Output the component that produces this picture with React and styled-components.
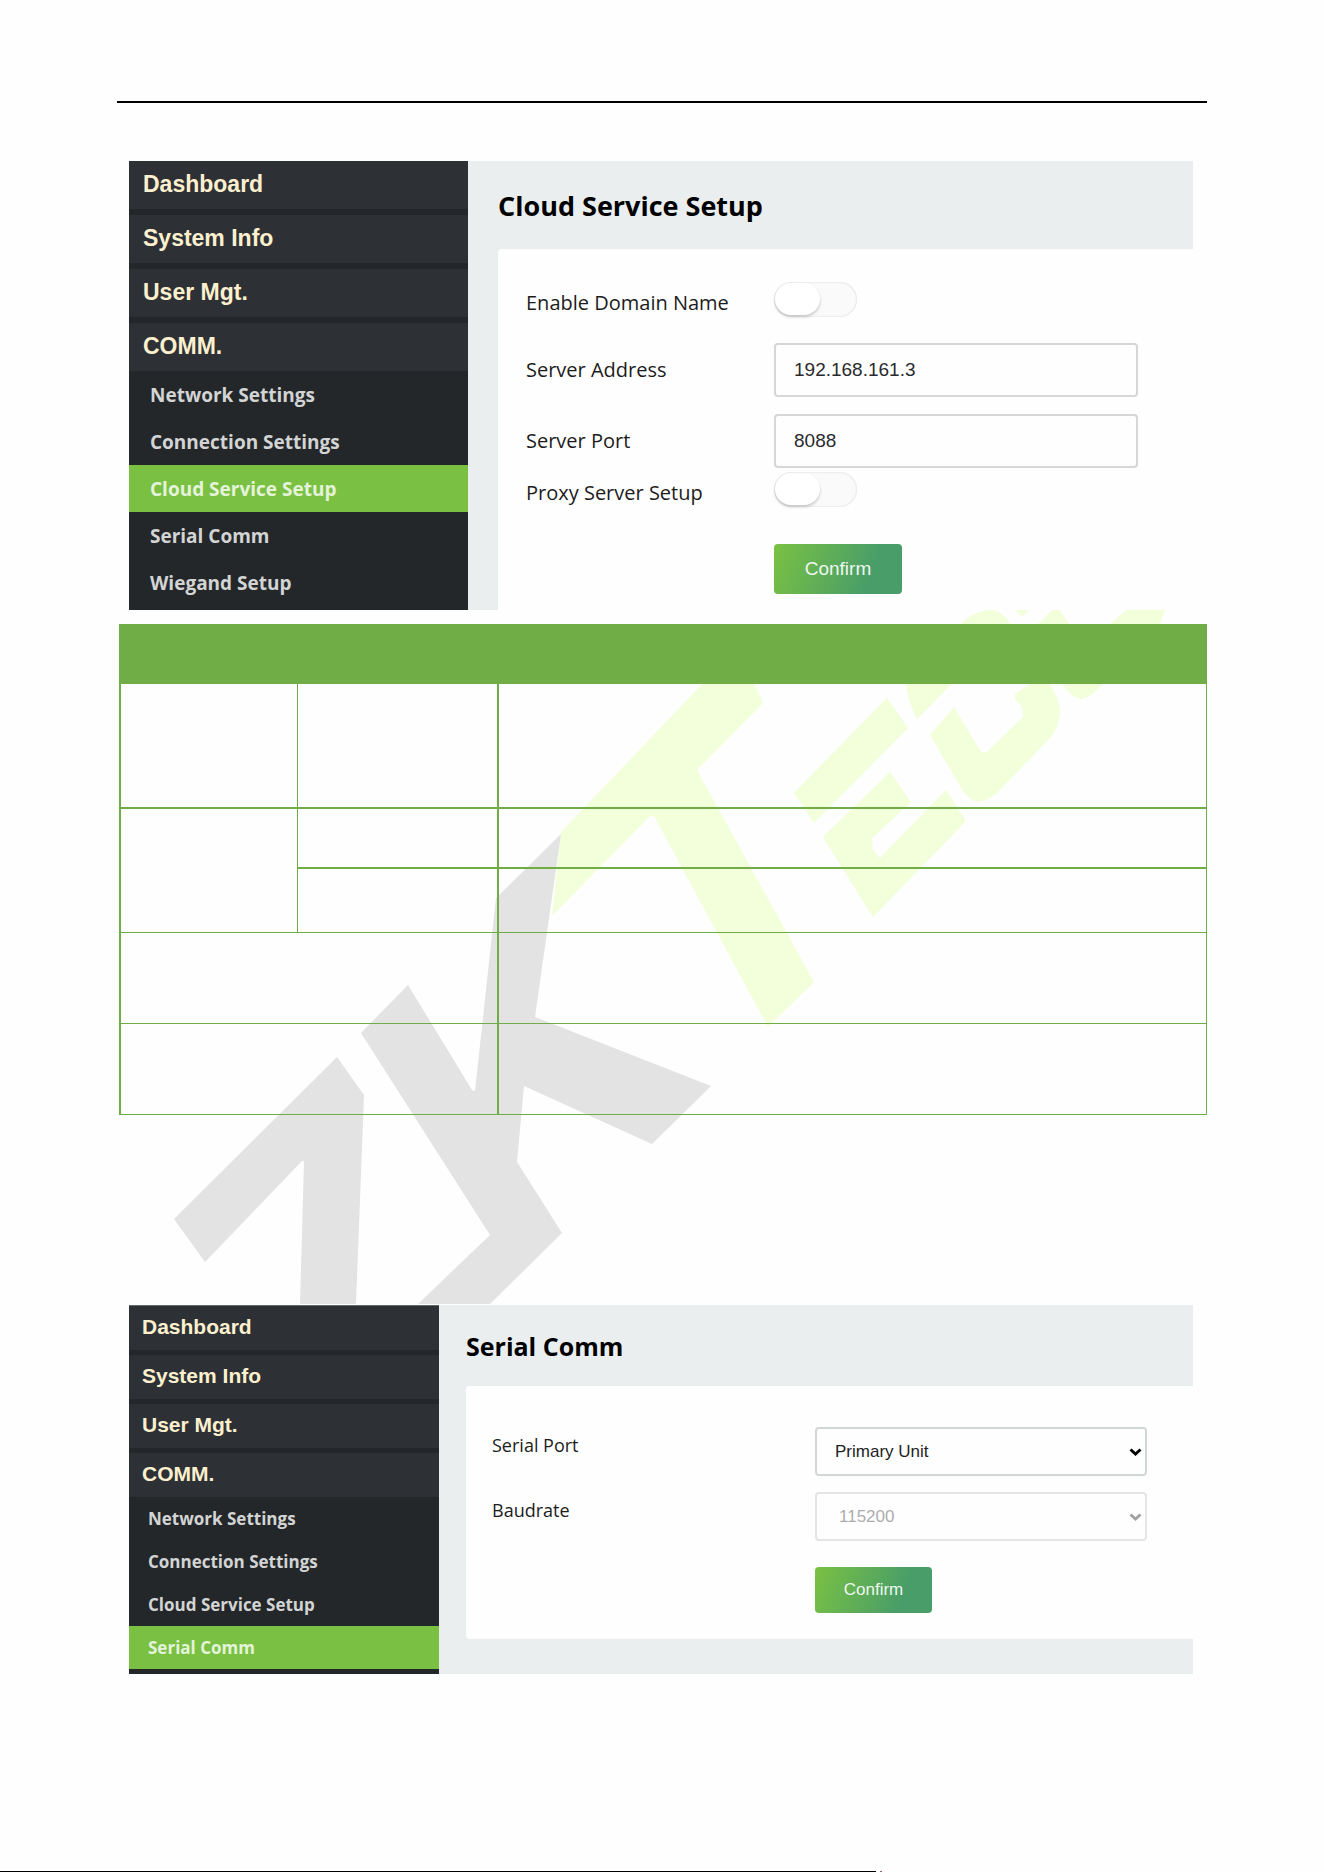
import React from 'react';
import styled, { createGlobalStyle, ThemeProvider } from 'styled-components';

const GlobalStyle = createGlobalStyle`
    * {
        box-sizing: border-box;
    }
    body {
        margin: 0;
        background-color: #fefefe;
        font-family: "Open Sans", "Noto Sans", sans-serif;
    }
`

const largePanel = {
    sidebarWidth: 339,
    menuFont: 23,
    menuHeight: 48,
    menuGap: 6,
    menuIndent: 14,
    menuNudge: 2,
    subFont: 19,
    subHeight: 47,
    subIndent: 21,
    mainIndent: 30,
    titleFont: 27,
    titleLine: 36,
    titlePadding: "27px 0 25px",
    cardPadding: "33px 55px 16px 28px",
    labelFont: 20,
    labelWidth: 248,
    fieldFont: 19,
    fieldHeight: 54,
    fieldLabelLine: 54,
    buttonWidth: 128,
    buttonHeight: 50,
}

const smallPanel = {
    sidebarWidth: 310,
    menuFont: 21,
    menuHeight: 44,
    menuGap: 5,
    menuIndent: 13,
    menuNudge: 2,
    subFont: 17,
    subHeight: 43,
    subIndent: 19,
    mainIndent: 27,
    titleFont: 25,
    titleLine: 34,
    titlePadding: "24px 0 23px",
    cardPadding: "41px 46px 26px 26px",
    labelFont: 18,
    labelWidth: 323,
    fieldFont: 17,
    fieldHeight: 49,
    fieldLabelLine: 36,
    buttonWidth: 117,
    buttonHeight: 46,
}

const Page = styled.div`
    min-height: 100vh;
    display: flex;
    flex-direction: column;
`

const PageHeader = styled.header`
    margin: 101px 117px 58px;
    border-top: 2px solid #000;
`

const Panel = styled.section`
    margin: 0 131px 0 129px;
    display: flex;
    background-color: #eaeeef;
`

const Sidebar = styled.nav`
    flex: 0 0 ${props => props.theme.sidebarWidth}px;
    padding-bottom: ${props => props.$bottom}px;
    border-top: ${props => props.$edge ? "1px solid #66696b" : "none"};
    background-color: #23272a;
`

const MenuList = styled.ul`
    list-style: none;
    margin: 0;
    padding: 0;
    display: flex;
    flex-direction: column;
    gap: ${props => props.theme.menuGap}px;
`

const SubList = styled.ul`
    list-style: none;
    margin: 0;
    padding: 0;
`

const MenuLink = styled.a`
    display: flex;
    align-items: center;
    height: ${props => props.theme.menuHeight}px;
    padding: 0 ${props => props.theme.menuIndent}px ${props => props.theme.menuNudge}px;
    background-color: #2d3035;
    color: #fdf0cf;
    font-family: "Liberation Sans", Arial, sans-serif;
    font-size: ${props => props.theme.menuFont}px;
    font-weight: 700;
    text-decoration: none;
`

const SubLink = styled.a`
    display: flex;
    align-items: center;
    height: ${props => props.theme.subHeight}px;
    padding: 0 ${props => props.theme.subIndent}px;
    background-color: ${props => props.$active ? "#7ac143" : "transparent"};
    color: ${props => props.$active ? "#e4f3d9" : "#d3d4d4"};
    font-size: ${props => props.theme.subFont}px;
    font-weight: 700;
    text-decoration: none;
`

const Main = styled.div`
    flex: 1;
    min-width: 0;
    padding: 0 0 ${props => props.$bottom}px ${props => props.theme.mainIndent}px;
`

const Title = styled.h2`
    margin: 0;
    padding: ${props => props.theme.titlePadding};
    font-size: ${props => props.theme.titleFont}px;
    line-height: ${props => props.theme.titleLine}px;
    font-weight: 700;
    color: #000;
`

const Card = styled.form`
    padding: ${props => props.theme.cardPadding};
    background-color: #fefefe;
    border-radius: ${props => props.$cut ? "4px 0 0 0" : "4px 0 0 4px"};
`

const Row = styled.div`
    display: grid;
    grid-template-columns: ${props => props.theme.labelWidth}px 1fr;
    align-items: start;
    margin-bottom: ${props => props.$gap}px;
`

const Label = styled.label`
    color: #1c1c1c;
    font-size: ${props => props.theme.labelFont}px;
    line-height: ${props => props.$toggle ? 42 : props.theme.fieldLabelLine}px;
`

const TextInput = styled.input`
    width: 100%;
    height: ${props => props.theme.fieldHeight}px;
    padding: 0 18px;
    border: 2px solid #d6d6d6;
    border-radius: 4px;
    background-color: #fefefe;
    color: #2a2a2e;
    font-family: "Liberation Sans", Arial, sans-serif;
    font-size: ${props => props.theme.fieldFont}px;
`

const Toggle = styled.input`
    appearance: none;
    display: flex;
    width: 83px;
    height: 35px;
    margin: 0;
    border-radius: 18px;
    background-color: #fafafa;
    box-shadow: inset 0 0 2px #ccc;
    &::before {
        content: "";
        width: 45px;
        height: 32px;
        margin: 1px 0 0 1px;
        border-radius: 16px;
        background-color: #fff;
        box-shadow: 0 2px 3px rgba(0, 0, 0, 0.2);
    }
    &:checked {
        justify-content: flex-end;
        background-color: #7ac143;
    }
`

const SelectWrap = styled.div`
    position: relative;
    opacity: ${props => props.$disabled ? 0.6 : 1};
`

const Select = styled.select`
    appearance: none;
    display: block;
    width: 100%;
    height: ${props => props.theme.fieldHeight}px;
    padding: 0 32px 0 ${props => props.disabled ? 22 : 18}px;
    border: 2px solid #d3d6d7;
    border-radius: 4px;
    background-color: #fefefe;
    color: ${props => props.disabled ? "#777" : "#222"};
    opacity: 1;
    font-family: "Liberation Sans", Arial, sans-serif;
    font-size: ${props => props.theme.fieldFont}px;
`

const Arrow = styled.svg`
    position: absolute;
    top: 21px;
    right: 5px;
    width: 13px;
    height: 9px;
    pointer-events: none;
`

const Button = styled.button`
    grid-column: 2;
    width: ${props => props.theme.buttonWidth}px;
    height: ${props => props.theme.buttonHeight}px;
    padding: 0;
    border: none;
    border-radius: 4px;
    background-image: linear-gradient(110deg, #7ac143 0%, #489d69 75%);
    color: #eef7f0;
    font-family: "Liberation Sans", Arial, sans-serif;
    font-size: ${props => props.theme.fieldFont}px;
`

const TableSection = styled.div`
    position: relative;
    margin: 0 117px 1px;
    padding: 14px 0 189px 2px;
`

const Watermark = styled.svg`
    position: absolute;
    inset: 0;
    width: 100%;
    height: 100%;
`

const Table = styled.table`
    position: relative;
    width: 100%;
    table-layout: fixed;
    border-collapse: separate;
    border-spacing: 0;
    th {
        height: 60px;
        padding: 0;
        background-color: #70ad47;
    }
`

const Col = styled.col`
    width: ${props => props.$width ? `${props.$width}px` : "auto"};
`

const Tr = styled.tr`
    height: ${props => props.$height}px;
`

const Td = styled.td`
    padding: 0;
    border: 0 solid #70ad47;
    border-left-width: ${props => props.$left}px;
    border-bottom-width: ${props => props.$bottom}px;
    border-right-width: ${props => props.$last ? 1 : 0}px;
`

const PageFooter = styled.footer`
    display: flex;
    gap: 4px;
    margin-top: auto;
`

const FooterRule = styled.div`
    width: 66.2%;
    height: 1px;
    background-color: #000;
`

const FooterMark = styled.div`
    width: 2px;
    height: 1px;
    background-color: #8a6a60;
`

const MENU = ["Dashboard", "System Info", "User Mgt.", "COMM."]

const SideMenu = ({ items, active, bottom, edge }) => (
    <Sidebar $bottom={bottom} $edge={edge}>
        <MenuList>
            {MENU.map(name =>
                <li key={name}>
                    <MenuLink href="#">{name}</MenuLink>
                </li>)}
        </MenuList>
        <SubList>
            {items.map(name =>
                <li key={name}>
                    <SubLink href="#" $active={name === active}>{name}</SubLink>
                </li>)}
        </SubList>
    </Sidebar>
)

const SelectField = ({ id, value, disabled }) => (
    <SelectWrap $disabled={disabled}>
        <Select id={id} defaultValue={value} disabled={disabled}>
            <option>{value}</option>
        </Select>
        <Arrow viewBox="0 0 13 9" fill="none" stroke={disabled ? "#666" : "#000"} strokeWidth="3">
            <path d="M1.5 1.5 L6.5 6 L11.5 1.5" />
        </Arrow>
    </SelectWrap>
)

const CloudPanel = () => (
    <ThemeProvider theme={largePanel}>
        <Panel>
            <SideMenu
                items={["Network Settings", "Connection Settings", "Cloud Service Setup", "Serial Comm", "Wiegand Setup"]}
                active="Cloud Service Setup"
                bottom={4}
            />
            <Main $bottom={0}>
                <Title>Cloud Service Setup</Title>
                <Card $cut={true}>
                    <Row $gap={19}>
                        <Label htmlFor="domain" $toggle={true}>Enable Domain Name</Label>
                        <Toggle id="domain" type="checkbox" />
                    </Row>
                    <Row $gap={17}>
                        <Label htmlFor="address">Server Address</Label>
                        <TextInput id="address" type="text" defaultValue="192.168.161.3" />
                    </Row>
                    <Row $gap={4}>
                        <Label htmlFor="port">Server Port</Label>
                        <TextInput id="port" type="text" defaultValue="8088" />
                    </Row>
                    <Row $gap={30}>
                        <Label htmlFor="proxy" $toggle={true}>Proxy Server Setup</Label>
                        <Toggle id="proxy" type="checkbox" />
                    </Row>
                    <Row $gap={0}>
                        <Button type="button">Confirm</Button>
                    </Row>
                </Card>
            </Main>
        </Panel>
    </ThemeProvider>
)

const SerialPanel = () => (
    <ThemeProvider theme={smallPanel}>
        <Panel>
            <SideMenu
                items={["Network Settings", "Connection Settings", "Cloud Service Setup", "Serial Comm"]}
                active="Serial Comm"
                bottom={5}
                edge={true}
            />
            <Main $bottom={35}>
                <Title>Serial Comm</Title>
                <Card>
                    <Row $gap={16}>
                        <Label htmlFor="serial">Serial Port</Label>
                        <SelectField id="serial" value="Primary Unit" />
                    </Row>
                    <Row $gap={26}>
                        <Label htmlFor="baud">Baudrate</Label>
                        <SelectField id="baud" value="115200" disabled={true} />
                    </Row>
                    <Row $gap={0}>
                        <Button type="button">Confirm</Button>
                    </Row>
                </Card>
            </Main>
        </Panel>
    </ThemeProvider>
)

const Logo = () => (
    <Watermark viewBox="117 610 1090 694" preserveAspectRatio="none" aria-hidden="true">
        <g fill="#f2ffda">
            <path d="M561 832 L730 655 L745 662 L763 703 L697 770 L814 982 L768 1027 L654 816 L650 816 L552 916 Z" />
            <path d="M887 698 L908 728 L814 823 L794 793 Z" />
            <path d="M890 772 L911 802 L872 838 L873 850 L880 858 L946 790 L966 821 L873 917 L823 837 Z" />
            <path d="M906 684 Q908 703 917 719 L1010 624 Q1002 610 990 610 Q975 610 961 624 L920 660 Q907 672 906 684 Z" />
            <path d="M930 735 L954 707 L981 752 L987 752 L1023 717 Q1024 706 1015 699 L1015 694 L1030 684 L1050 684 Q1060 700 1060 712 Q1059 728 1050 738 L996 794 Q985 802 977 802 Q966 798 960 786 Z" />
            <path d="M1015 610 L1029 610 L1022 617 Z" />
            <path d="M1038 624 L1052 610 L1060 610 L1069 624 Z" />
            <path d="M1060 680 Q1070 698 1082 699 Q1092 697 1104 682 Z" />
            <path d="M1110 624 L1124 612 L1128 610 L1165 610 L1160 624 Z" />
        </g>
        <g fill="#e3e3e3">
            <path d="M561 834 L496 898 L475 1091 L472 1090 L408 985 L361 1033 L490 1235 L418 1304 L490 1304 L562 1233 L517 1162 L524 1086 L652 1144 L711 1086 L535 1017 Z" />
            <path d="M337 1057 L174 1219 L205 1262 L302 1161 L304 1161 L300 1304 L356 1304 L364 1095 Z" />
        </g>
    </Watermark>
)

const FieldTable = () => (
    <Table>
        <colgroup>
            <Col $width={178} />
            <Col $width={200} />
            <Col />
        </colgroup>
        <thead>
            <tr>
                <th colSpan={2}></th>
                <th></th>
            </tr>
        </thead>
        <tbody>
            <Tr $height={125}>
                <Td $left={2} $bottom={2} />
                <Td $left={1} $bottom={2} />
                <Td $left={2} $bottom={2} $last={true} />
            </Tr>
            <Tr $height={60}>
                <Td $left={2} $bottom={1} rowSpan={2} />
                <Td $left={1} $bottom={2} />
                <Td $left={2} $bottom={2} $last={true} />
            </Tr>
            <Tr $height={64}>
                <Td $left={1} $bottom={1} />
                <Td $left={2} $bottom={1} $last={true} />
            </Tr>
            <Tr $height={91}>
                <Td $left={2} $bottom={1} colSpan={2} />
                <Td $left={2} $bottom={1} $last={true} />
            </Tr>
            <Tr $height={91}>
                <Td $left={2} $bottom={1} colSpan={2} />
                <Td $left={2} $bottom={1} $last={true} />
            </Tr>
        </tbody>
    </Table>
)

const App = () => {
    return (
        <Page>
            <GlobalStyle />
            <PageHeader />
            <CloudPanel />
            <TableSection>
                <Logo />
                <FieldTable />
            </TableSection>
            <SerialPanel />
            <PageFooter>
                <FooterRule />
                <FooterMark />
            </PageFooter>
        </Page>
    );
}

export default App;
